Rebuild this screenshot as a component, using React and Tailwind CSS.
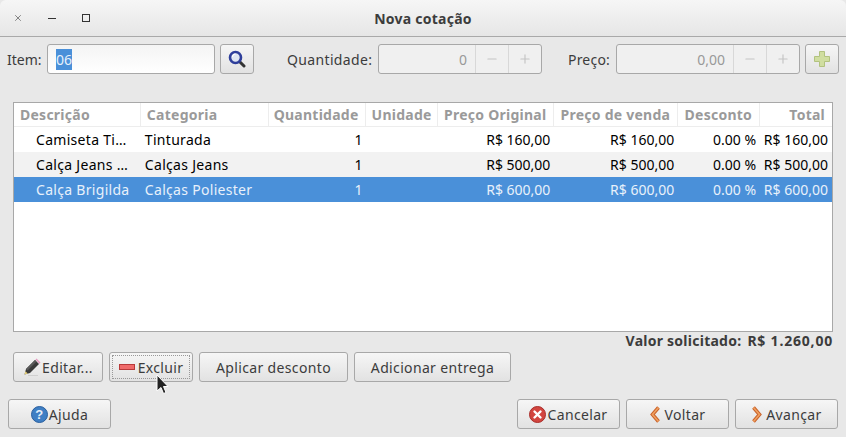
import { Minus, Plus, X } from "lucide-react";

const font = "font-['Noto_Sans',sans-serif]";

const columns = [
  { label: "Descrição", width: "w-[127px]" },
  { label: "Categoria", width: "w-[128px]" },
  { label: "Quantidade", width: "w-[97px]", right: true },
  { label: "Unidade", width: "w-[73px]" },
  { label: "Preço Original", width: "w-[116px]", right: true },
  { label: "Preço de venda", width: "w-[124px]", right: true },
  { label: "Desconto", width: "w-[82px]", right: true },
  { label: "Total", width: "w-[72px]", right: true },
];

const rows = [
  { cells: ["Camiseta Ti…", "Tinturada", "1", "", "R$ 160,00", "R$ 160,00", "0.00 %", "R$ 160,00"], bg: "bg-white text-black" },
  { cells: ["Calça Jeans …", "Calças Jeans", "1", "", "R$ 500,00", "R$ 500,00", "0.00 %", "R$ 500,00"], bg: "bg-[#f2f2f2] text-black" },
  { cells: ["Calça Brigilda", "Calças Poliester", "1", "", "R$ 600,00", "R$ 600,00", "0.00 %", "R$ 600,00"], bg: "bg-[#4a90d9] text-[#e8f1fb]" },
];

function Btn({ className = "", children }) {
  return (
    <div className={`flex h-[30px] shrink-0 items-center justify-center rounded-[3px] border border-[#a8a8a8] bg-gradient-to-b from-[#f6f6f6] to-[#e2e2e2] text-[14px] tracking-[0.35px] text-[#3c3c3c] ${className}`}>
      {children}
    </div>
  );
}

function Spin({ width, value }) {
  return (
    <div className={`flex h-[30px] items-center rounded-[3px] border border-[#a8a8a8] bg-[#f0f0f0] text-[14px] text-[#999] ${width}`}>
      <div className="flex-1 pr-[8px] text-right">{value}</div>
      <div className="flex h-full w-[33px] items-center justify-center border-l border-[#d8d8d8]">
        <Minus size={14} strokeWidth={2} className="text-[#c4c4c4]" />
      </div>
      <div className="flex h-full w-[33px] items-center justify-center border-l border-[#d8d8d8]">
        <Plus size={14} strokeWidth={2} className="text-[#c4c4c4]" />
      </div>
    </div>
  );
}

function SearchIcon() {
  return (
    <svg width="18" height="18" viewBox="0 0 18 18">
      <line x1="11" y1="11" x2="16" y2="16" stroke="#333" strokeWidth="3" strokeLinecap="round" />
      <circle cx="7.5" cy="7.5" r="5.5" fill="#dfe6f2" stroke="#2f3f9b" strokeWidth="2.6" />
      <path d="M4.5 7a3 3 0 0 1 3-3" fill="none" stroke="#fff" strokeWidth="1.2" />
    </svg>
  );
}

function GreenPlus() {
  return (
    <svg width="18" height="18" viewBox="0 0 18 18">
      <path d="M6.5 1.5h5v5h5v5h-5v5h-5v-5h-5v-5h5z" fill="#d0dea0" stroke="#b2c27f" />
    </svg>
  );
}

function Pencil() {
  return (
    <svg width="18" height="18" viewBox="0 0 18 18">
      <path d="M1.5 16.5l1.5-5.5L12 2l4 4-9 9z" fill="#3a3a3a" />
      <path d="M3 11l9-9 1.5 1.5-9 9z" fill="#5a5a5a" />
      <path d="M1.5 16.5l.9-3.3 2.4 2.4z" fill="#e8d27a" />
      <path d="M12.5 1.5l1-1 4 4-1 1.2z" fill="#e59ac0" />
      <path d="M5 17.5h10" stroke="#cfcfcf" strokeWidth="1" />
    </svg>
  );
}

function HelpIcon() {
  return (
    <svg width="17" height="17" viewBox="0 0 17 17">
      <circle cx="8.5" cy="8.5" r="8" fill="#3f7fc4" stroke="#2a5f9e" />
      <text x="8.5" y="13" textAnchor="middle" fontSize="13" fontWeight="700" fill="#e6eef8" fontFamily="Liberation Sans, sans-serif">?</text>
    </svg>
  );
}

function CancelIcon() {
  return (
    <svg width="17" height="17" viewBox="0 0 17 17">
      <circle cx="8.5" cy="8.5" r="8" fill="#d2453f" stroke="#a82e2a" />
      <path d="M5.5 5.5l6 6M11.5 5.5l-6 6" stroke="#fff" strokeWidth="2.4" strokeLinecap="round" />
    </svg>
  );
}

function Chevron({ flip }) {
  return (
    <svg width="11" height="17" viewBox="0 0 11 17" className={flip ? "-scale-x-100" : ""}>
      <path d="M8.5 1.5L2.5 8.5l6 7" fill="none" stroke="#c9622b" strokeWidth="3.6" strokeLinejoin="miter" />
      <path d="M8.5 1.5L2.5 8.5l6 7" fill="none" stroke="#f0a060" strokeWidth="1.6" />
    </svg>
  );
}

function Cursor() {
  return (
    <svg width="13" height="21" viewBox="0 0 13 21" className="absolute left-[156px] top-[374px]">
      <path d="M1 1v16l4-3.5 2.5 6 2.5-1-2.5-6H12z" fill="#222" stroke="#fff" strokeWidth="1" />
    </svg>
  );
}

export default function App() {
  return (
    <div className={`relative h-[437px] w-[846px] overflow-hidden bg-[#e8e8e8] ${font}`}>
      {/* title bar */}
      <div className="relative flex h-[37px] items-center justify-center rounded-t-[6px] border-b border-[#a9a9a9] bg-gradient-to-b from-[#f6f6f6] to-[#e6e6e6]">
        <span className="text-[14px] font-bold tracking-[0.25px] text-[#3c3c3c]">Nova cotação</span>
        <div className="absolute left-[13px] top-[13px] flex items-center">
          <X size={10} strokeWidth={1.5} className="text-[#444]" />
          <div className="ml-[25px] h-px w-[8px] bg-[#333]" />
          <div className="ml-[26px] h-[8px] w-[8px] border border-[#333]" />
        </div>
      </div>

      {/* top form */}
      <div className="mt-[7px] flex h-[30px] items-center pl-[7px] text-[14px] text-[#3c3c3c]">
        <span className="w-[40px]">Item:</span>
        <div className="flex h-[30px] w-[168px] items-center rounded-[3px] border border-[#a8a8a8] bg-gradient-to-b from-[#f4f4f4] to-white pl-[8px]">
          <span className="bg-[#4a90d9] text-[#e8f1fb]">06</span>
        </div>
        <Btn className="ml-[5px] w-[34px]"><SearchIcon /></Btn>
        <span className="ml-[33px] w-[91px] tracking-[0.35px]">Quantidade:</span>
        <Spin width="w-[164px]" value="0" />
        <span className="ml-[26px] w-[48px] tracking-[0.2px]">Preço:</span>
        <Spin width="w-[184px]" value="0,00" />
        <Btn className="ml-[5px] w-[34px]"><GreenPlus /></Btn>
      </div>

      {/* table */}
      <div className="ml-[13px] mt-[28px] flex h-[230px] w-[820px] flex-col border border-[#a8a8a8] bg-white">
        <div className="flex h-[24px] shrink-0 border-b border-[#ededed] text-[14px] font-bold tracking-[0.25px] text-[#9a9a9a]">
          {columns.map((c, i) => (
            <div key={c.label} className={`flex items-center overflow-hidden whitespace-nowrap pl-[6px] ${i > 3 ? "pr-[7px]" : "pr-[6px]"} ${i < 7 ? "border-r border-[#ededed]" : ""} ${c.right ? "justify-end" : ""} ${c.width}`}>
              {c.label}
            </div>
          ))}
        </div>
        {rows.map((r) => (
          <div key={r.cells[0]} className={`flex h-[25px] shrink-0 text-[14px] ${r.bg}`}>
            {r.cells.map((cell, i) => (
              <div
                key={i}
                className={`flex items-center overflow-hidden whitespace-nowrap ${columns[i].width} ${i === 0 ? "pl-[22px] tracking-[0.3px]" : ""} ${i === 1 ? "pl-[4px] tracking-[0.3px]" : ""} ${i === 2 ? "justify-end pr-[3px]" : ""} ${i > 3 ? "justify-end pr-[4px]" : ""}`}
              >
                {cell}
              </div>
            ))}
          </div>
        ))}
      </div>

      <div className="mr-[13px] flex h-[17px] items-center justify-end gap-[6px] text-[14px] font-bold text-[#3c3c3c]">
        <span className="tracking-[0.25px]">Valor solicitado:</span>
        <span className="tracking-[0.8px]">R$ 1.260,00</span>
      </div>

      {/* row actions */}
      <div className="ml-[13px] mt-[3px] flex gap-[6px]">
        <Btn className="w-[90px] gap-[1px]"><Pencil />Editar...</Btn>
        <Btn className="w-[84px] p-[2px]">
          <div className="flex h-full w-full items-center justify-center gap-[3px] border border-dotted border-[#999]">
            <div className="h-[6px] w-[16px] border border-[#b83a3a] bg-[#ef6a6a]" />
            Excluir
          </div>
        </Btn>
        <Btn className="w-[149px]">Aplicar desconto</Btn>
        <Btn className="w-[157px]">Adicionar entrega</Btn>
      </div>

      {/* dialog actions */}
      <div className="ml-[8px] mr-[8px] mt-[17px] flex gap-[6px]">
        <Btn className="mr-auto w-[103px] gap-[1px]"><HelpIcon />Ajuda</Btn>
        <Btn className="w-[103px] gap-[1px]"><CancelIcon />Cancelar</Btn>
        <Btn className="w-[103px] gap-[4px]"><Chevron />Voltar</Btn>
        <Btn className="w-[103px] gap-[4px]"><Chevron flip />Avançar</Btn>
      </div>

      <Cursor />
    </div>
  );
}
